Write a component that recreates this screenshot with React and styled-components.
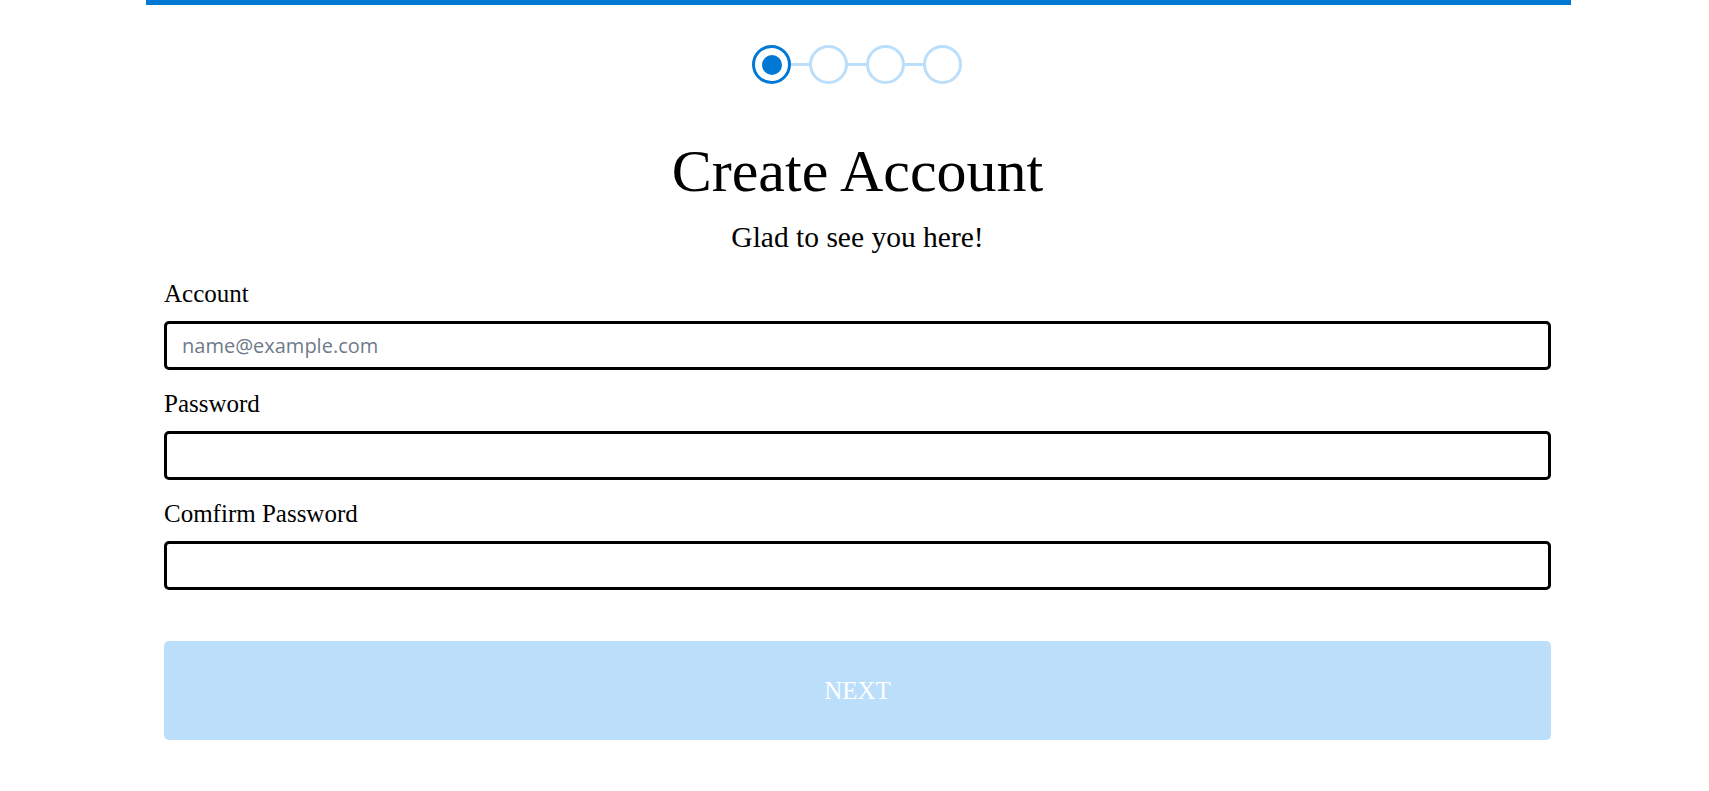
import React, { useState } from 'react'
import styled, { createGlobalStyle } from 'styled-components'

const GlobalStyle = createGlobalStyle`
  html, body {
    margin: 0;
    padding: 0;
    background: #ffffff;
  }
  body {
    font-family: "Liberation Serif", "Times New Roman", serif;
    color: #000;
  }
`

const steps = [0, 1, 2, 3]

function App() {
    const [account, setAccount] = useState('')
    const [password, setPassword] = useState('')
    const [confirm, setConfirm] = useState('')
    const current = 0

    return (
        <>
            <GlobalStyle />
            <Page>
                <Container>
                    <Stepper>
                        {steps.map((step, index) => (
                            <React.Fragment key={step}>
                                {index > 0 && <Connector />}
                                <Step active={index === current}>
                                    {index === current && <Dot />}
                                </Step>
                            </React.Fragment>
                        ))}
                    </Stepper>

                    <Title>Create Account</Title>
                    <Subtitle>Glad to see you here!</Subtitle>

                    <Form onSubmit={(e) => e.preventDefault()}>
                        <Field>
                            <Label htmlFor="account">Account</Label>
                            <Input
                                id="account"
                                type="text"
                                placeholder="name@example.com"
                                value={account}
                                onChange={(e) => setAccount(e.target.value)}
                            />
                        </Field>
                        <Field>
                            <Label htmlFor="password">Password</Label>
                            <Input
                                id="password"
                                type="password"
                                value={password}
                                onChange={(e) => setPassword(e.target.value)}
                            />
                        </Field>
                        <Field>
                            <Label htmlFor="confirm">Comfirm Password</Label>
                            <Input
                                id="confirm"
                                type="password"
                                value={confirm}
                                onChange={(e) => setConfirm(e.target.value)}
                            />
                        </Field>
                        <NextButton type="submit" disabled>NEXT</NextButton>
                    </Form>
                </Container>
            </Page>
        </>
    )
}

const Page = styled.div`
  padding-left: 8px;
`

const Container = styled.div`
  width: 1425px;
  margin: 0 auto;
  border-top: 5px solid #0078d4;
  padding: 0 20px 0 18px;
  box-sizing: border-box;
  display: flex;
  flex-direction: column;
  align-items: center;
`

const Stepper = styled.div`
  display: flex;
  align-items: center;
  margin-top: 40px;
  margin-left: -1px;
`

const Step = styled.div`
  width: 39px;
  height: 39px;
  box-sizing: border-box;
  border-radius: 50%;
  border: 3.5px solid ${(p) => (p.active ? '#0078d4' : '#bbdefb')};
  display: flex;
  align-items: center;
  justify-content: center;
  background: #fff;
`

const Dot = styled.div`
  width: 20px;
  height: 20px;
  border-radius: 50%;
  background: #0078d4;
`

const Connector = styled.div`
  width: 18px;
  height: 3px;
  background: #bbdefb;
`

const Title = styled.h1`
  margin: 57px 0 0;
  font-size: 60px;
  line-height: 60px;
  font-weight: normal;
`

const Subtitle = styled.h3`
  margin: 21px 0 0;
  font-size: 29.5px;
  line-height: 30px;
  font-weight: normal;
`

const Form = styled.form`
  align-self: stretch;
  display: flex;
  flex-direction: column;
  margin-top: 28px;
`

const Field = styled.div`
  display: flex;
  flex-direction: column;
  gap: 13px;
  margin-bottom: 20px;
`

const Label = styled.label`
  font-size: 25px;
  line-height: 28px;
`

const Input = styled.input`
  height: 49px;
  box-sizing: border-box;
  border: 3px solid #000;
  border-radius: 5px;
  padding: 0 15px;
  font-family: "Open Sans", "Noto Sans", sans-serif;
  font-size: 20px;
  outline: none;
  &::placeholder {
    color: #6f7a8a;
  }
`

const NextButton = styled.button`
  margin-top: 31px;
  height: 99px;
  border: none;
  border-radius: 5px;
  background: #bbdefb;
  color: #ffffff;
  font-family: "Liberation Serif", "Times New Roman", serif;
  font-size: 25px;
`

export default App
